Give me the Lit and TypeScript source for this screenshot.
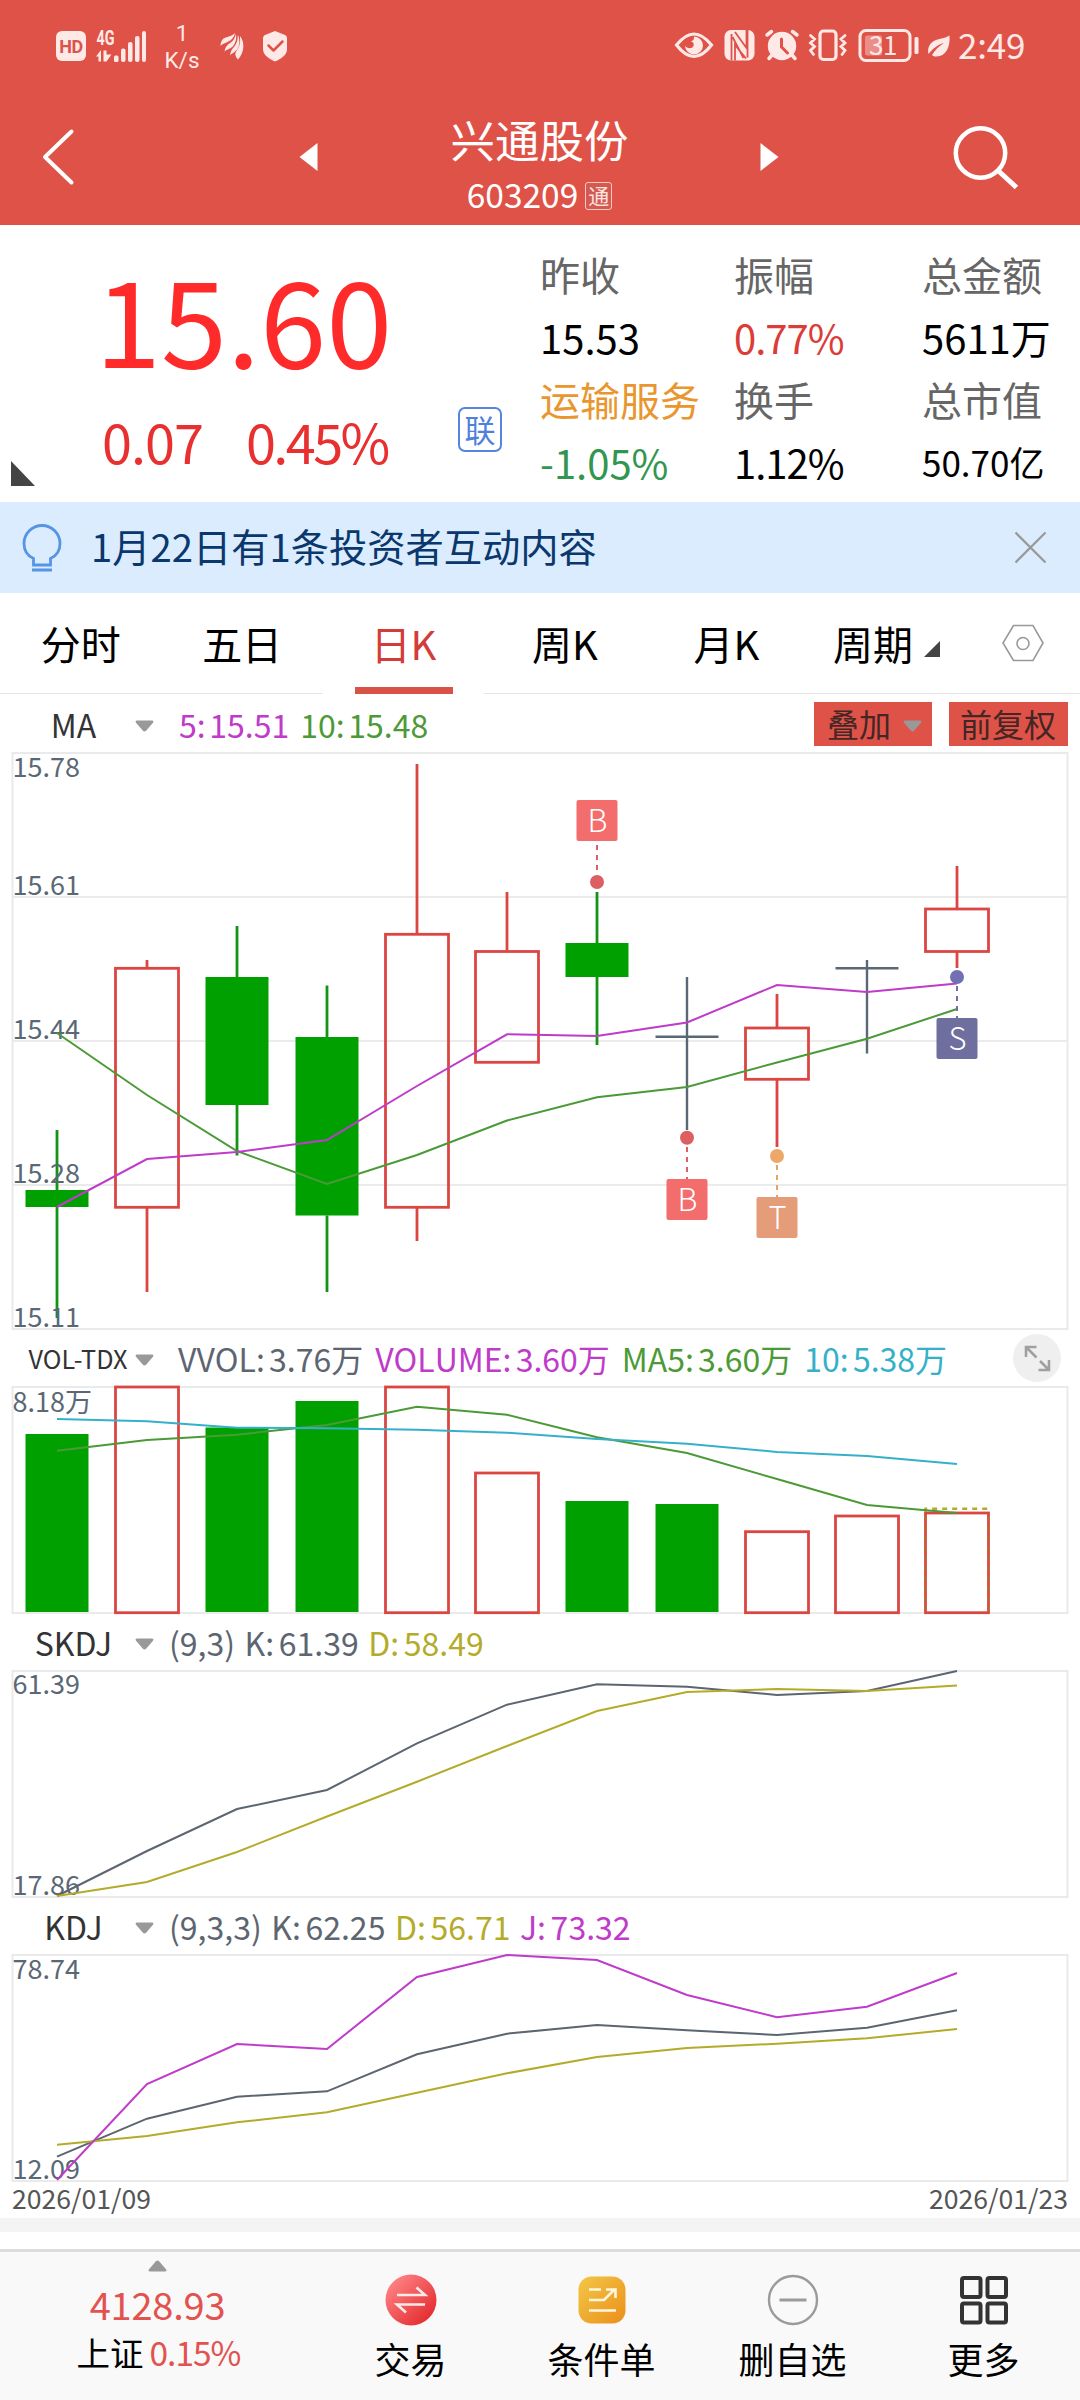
import { LitElement, html, svg, css, nothing } from "lit";
import { customElement } from "lit/decorators.js";
import { classMap } from "lit/directives/class-map.js";

type Kind = "up" | "down" | "flat";
interface Candle { kind: Kind; high: number; top: number; bottom: number; low: number; }
interface Marker { i: number; letter: string; tone: string; dot: number; box: number; from: number; to: number; }
interface Reading { text: string; tone: string; }

const X0 = 57;
const STEP = 90;
const cx = (i: number) => X0 + STEP * i;

const CANDLES: Candle[] = [
  { kind: "down", high: 1130, top: 1190, bottom: 1207, low: 1318 },
  { kind: "up", high: 960, top: 968.3, bottom: 1207.3, low: 1292 },
  { kind: "down", high: 926, top: 977, bottom: 1105, low: 1155.5 },
  { kind: "down", high: 985.5, top: 1037, bottom: 1215.5, low: 1292 },
  { kind: "up", high: 764, top: 934.3, bottom: 1207.3, low: 1241 },
  { kind: "up", high: 892, top: 951.5, bottom: 1062.3, low: 1062 },
  { kind: "down", high: 892, top: 943, bottom: 977, low: 1045 },
  { kind: "flat", high: 977, top: 1036.7, bottom: 1036.7, low: 1130 },
  { kind: "up", high: 994, top: 1028, bottom: 1079.3, low: 1147 },
  { kind: "flat", high: 960, top: 968.3, bottom: 968.3, low: 1053.5 },
  { kind: "up", high: 866, top: 909, bottom: 951.5, low: 968 },
];

const MARKERS: Marker[] = [
  { i: 6, letter: "B", tone: "buy", dot: 882, box: 800, from: 845, to: 871 },
  { i: 7, letter: "B", tone: "buy", dot: 1137.7, box: 1179, from: 1147, to: 1179 },
  { i: 8, letter: "T", tone: "turn", dot: 1156, box: 1197, from: 1165, to: 1197 },
  { i: 10, letter: "S", tone: "sell", dot: 977, box: 1018, from: 986, to: 1018 },
];

const VOLUMES: { kind: Kind; top: number }[] = [
  { kind: "down", top: 1434 }, { kind: "up", top: 1387 }, { kind: "down", top: 1427.5 },
  { kind: "down", top: 1401 }, { kind: "up", top: 1387 }, { kind: "up", top: 1473 },
  { kind: "down", top: 1501 }, { kind: "down", top: 1504 }, { kind: "up", top: 1531.7 },
  { kind: "up", top: 1516 }, { kind: "up", top: 1513 },
];

const LINES = {
  ma5: [1207, 1159, 1152, 1140, 1086, 1034.3, 1036, 1022.5, 985, 992, 983.5],
  ma10: [1033, 1095, 1151, 1184, 1155, 1120.5, 1097.3, 1087, 1062.5, 1038.7, 1009],
  vol5: [1450.7, 1440, 1434.7, 1425, 1406.7, 1414.7, 1437.3, 1453, 1479, 1505, 1513],
  vol10: [1419, 1421.3, 1427.7, 1428.3, 1429.7, 1432.7, 1439, 1443.7, 1452, 1456, 1464],
  skK: [1896, 1851, 1809, 1790, 1743.3, 1704.7, 1684.3, 1686.7, 1695, 1691, 1671],
  skD: [1896, 1882, 1852, 1816.5, 1781.7, 1746, 1711, 1692, 1689, 1691, 1685.5],
  k: [2156.7, 2118.7, 2096.7, 2091.3, 2054.3, 2033.7, 2025, 2030.3, 2035, 2027.7, 2010.3],
  d: [2144.7, 2136, 2122.3, 2112.3, 2092.7, 2073.3, 2057, 2048, 2043.7, 2038.3, 2029],
  j: [2180, 2084, 2044, 2049, 1977, 1955, 1960, 1995, 2017.3, 2006.7, 1973],
};

const line = (ys: number[], tone: string) =>
  svg`<polyline class="line ${tone}" points=${ys.map((y, i) => `${cx(i)},${y}`).join(" ")}></polyline>`;
const frame = (top: number, bottom: number) =>
  svg`<rect class="frame" x="12.5" y=${top} width="1055" height=${bottom - top}></rect>`;
const axis = (text: string, y: number) => svg`<text class="axis" x="12.5" y=${y}>${text}</text>`;

const caretDown = html`<svg class="caret" viewBox="0 0 19 12"><path d="M2 .5h15q2.500.5.8 2.500l-6.500 7.500q-1.800 1.800-3.600 0L1.200 3Q-.5 1 2 .5z"></path></svg>`;

@customElement("status-bar")
export class StatusBar extends LitElement {
  static styles = css`
    :host { display: block; color: #ffe9e7; font-family: Roboto, sans-serif; }
    .bar { display: flex; height: 90px; align-items: center; padding: 2px 56px 0 56px; box-sizing: border-box; }
    svg { display: block; flex: none; fill: #ffe9e7; }
    .hd { width: 30px; height: 30px; border-radius: 6px; background: #ffe9e7; color: #d9554c; font: 700 18px/31px Roboto, sans-serif; text-align: center; letter-spacing: -0.5px; }
    .sig { margin-left: 10px; }
    .net { font: 700 20px "Roboto", sans-serif; }
    .speed { width: 36px; margin: 2px 0 0 18px; display: flex; flex-direction: column; align-items: center; font-size: 22.500px; line-height: 27px; }
    .left { display: flex; align-items: center; flex: 1; }
    .feather { margin-left: 19px; }
    .shield { margin-left: 17px; }
    .right { display: flex; align-items: center; }
    .time { font: 400 35px/40px "Noto Sans CJK SC", sans-serif; width: 66px; margin: -4px 0 0 7px; white-space: nowrap; letter-spacing: -0.2px; }
    .pct { font: 400 26px "Noto Sans CJK SC", sans-serif; fill: #ffe9e7; letter-spacing: -0.5px; }
    .ln { fill: none; stroke: #ffe9e7; }
    .cut { fill: none; stroke: #df5248; }
  `;
  render() {
    return html`<div class="bar">
      <div class="left">
        <div class="hd">HD</div>
        <svg class="sig" width="50" height="34" viewBox="96 28 50 34">
          <text class="net" x="96.500" y="43.500" textLength="18" lengthAdjust="spacingAndGlyphs">4G</text>
          <path d="M101 60.500V49l-5 6.500h2.500v5zM103.500 49.500h3v4h5l-5 7h-3z"></path>
          <rect x="114" y="54.500" width="4.500" height="6.500" rx="1.500"></rect><rect x="121" y="47.500" width="4.500" height="13.500" rx="2"></rect>
          <rect x="128" y="41" width="4.500" height="20" rx="2"></rect><rect x="135" y="35" width="4.500" height="26" rx="2"></rect>
          <rect x="142" y="30" width="4" height="31" rx="2"></rect>
        </svg>
        <div class="speed"><span>1</span><span>K/s</span></div>
        <svg class="feather" width="26" height="28" viewBox="220 31 26 28">
          <path d="M221.500 45c0-3 1-6 3-7.500 2.500-1.500 8-2 11.500-5.500-1 5-4.500 8-8.500 9.500-2.500 1-4.500 1.500-6 3.500zM225.500 50.500c.5-4 2.500-6.500 5.500-8.500s5-4.500 5.800-9c1 4 .2 8-2.300 11.500-2.500 3.500-6.500 3.500-9 6zM231 54.500c.5-4 2-6.500 4-8.500 2.500-3 4-7 3.800-12 2 3 2 9 .2 13-1.500 3.500-6 5-8 7.500zM239 58.500c-3-3-3.500-6-1.500-8.500 3-3.500 4-8.500 3.500-15 5 6 4.500 16.500-2 23.500z"></path>
        </svg>
        <svg class="shield" width="26" height="32" viewBox="262 29 26 32">
          <path d="M275 30l10 4q2 1 2 3v11c0 6-6 10-12 12.500-6-2.500-12-6.500-12-12.500V37q0-2 2-3z"></path>
          <path class="cut" stroke-width="2.500" stroke-linecap="round" stroke-linejoin="round" d="M268.500 44.500l5 5 9-9"></path>
        </svg>
      </div>
      <div class="right">
        <svg width="252" height="36" viewBox="675 28 252 36">
          <path class="ln" stroke-width="3.200" d="M677.500 45C684 37 689.500 34 695 34s11 3 17.500 11C706 53.500 700.500 56.500 695 56.500S684 53.500 677.500 45z"></path>
          <path d="M695 36.500a9 9 0 1 1-9 9c2 3.500 7 3.500 8.500.5 1-3-1-4-2.500-4.500 3-1 3-3 3-5z"></path>
          <rect x="725.500" y="30" width="30" height="30.500" rx="6.500"></rect>
          <path class="cut" stroke-width="1.800" d="M732.500 60.500V34M748.500 57.500V30M736 32l11.500 16V30M733.500 37l11 21M736 60.500V45l11 13.500"></path>
          <circle cx="783" cy="46" r="14.200"></circle>
          <path class="ln" stroke-width="3.500" stroke-linecap="round" d="M768 35l4.500-3.500M798 35l-4.500-3.500M773 55l-3 3.500M793 55l3 3.500"></path>
          <path class="cut" stroke-width="3" stroke-linecap="round" d="M782.500 39v8l6 6"></path>
          <rect class="ln" stroke-width="3.200" x="821" y="31" width="16" height="28.500" rx="3.500"></rect>
          <path class="ln" stroke-width="2.800" stroke-linecap="round" d="M811.500 35.500l4 3.500-4 4 4 3.500-4 4 3 4M846 35.500l-4 3.500 4 4-4 3.500 4 4-3 4"></path>
          <rect class="ln" stroke-width="3" x="861" y="30.500" width="50" height="30" rx="6"></rect>
          <rect x="866" y="35.500" width="17" height="20" rx="2" opacity=".4"></rect>
          <rect x="915.500" y="37" width="4" height="17" rx="1.500"></rect>
          <text class="pct" x="870" y="55">31</text>
        </svg>
        <svg width="25" height="26" viewBox="927 33 25 26">
          <path d="M950.500 35.500c1 12-4 21-13 21-2 0-3.500-.5-4.500-1.500 3-5 7-9 12-12-7 2-11.500 6-15.500 11-1.500-6 1.500-12 7.500-14 4.500-1.500 9-1.500 13.500-4.500z"></path>
        </svg>
        <div class="time">2:49</div>
      </div>
    </div>`;
  }
}

@customElement("app-root")
export class AppRoot extends LitElement {
  static styles = css`
    :host { display: block; width: 1080px; height: 2400px; overflow: hidden; background: #fff; color: #000; font-family: "Noto Sans CJK SC", sans-serif; }
    * { box-sizing: border-box; }
    svg { display: block; flex: none; overflow: visible; }
    .header { height: 225px; background: #df5248; color: #fff; }
    .nav { display: grid; grid-template-columns: 299px 18px 1fr 18px 302px; height: 134px; align-items: center; }
    .nav .icon { fill: none; stroke: #fff; }
    .nav .tri { fill: #fff; }
    .back { padding-left: 40px; }
    .find { padding-left: 173px; }
    .title { display: flex; flex-direction: column; align-items: center; padding-left: 2px; }
    .name { font-size: 44.500px; line-height: 60px; margin-top: 14px; }
    .code { display: flex; align-items: center; gap: 7px; font-size: 33.500px; line-height: 50px; }
    .tong { width: 27px; height: 28px; margin-top: 4px; border: 1.500px solid #f7c9c5; border-radius: 3px; font-size: 21px; line-height: 24px; text-align: center; color: #ffe3e0; background: #d4594f; }

    .quote { display: flex; height: 277px; }
    .main { width: 540px; display: grid; grid-template-columns: 458px 1fr; grid-template-rows: 176px 101px; }
    .price { grid-column: 1 / 3; padding-left: 95px; color: #ff2a2a; font-size: 119px; line-height: 176px; padding-top: 3px; }
    .change { display: flex; align-items: flex-start; color: #e93030; font-size: 54px; line-height: 80px; }
    .corner { margin: 60px 67px 0 11px; width: 24px; height: 25px; fill: #444; }
    .delta { width: 144px; letter-spacing: -1px; }
    .rate { letter-spacing: -2.600px; }
    .lian { width: 44px; height: 45px; margin-top: 6px; border: 2px solid #5585dc; border-radius: 7px; font-size: 31px; line-height: 39px; text-align: center; color: #4f80dc; }
    .stats { display: grid; grid-template-columns: 194px 188px 1fr; grid-auto-rows: 62.600px; padding-top: 18px; flex: 1; font-size: 40px; line-height: 62.600px; white-space: nowrap; }
    .label { color: #666; }
    .orange { color: #ea962f; }
    .red { color: #dc3b38; }
    .green { color: #339650; }
    .pct { letter-spacing: -1px; }
    .green.pct { letter-spacing: 0; }
    .small { font-size: 35px; }

    .notice { display: flex; align-items: center; height: 91px; background: #dbecfe; padding: 0 33px 0 21px; color: #0a376c; font-size: 38.250px; }
    .notice span { flex: 1; padding-left: 28px; margin-top: -5px; }
    .bulb { fill: none; stroke: #5694e6; stroke-width: 2.800; }
    .close { stroke: #999; stroke-width: 2.300; }

    .tabs { display: flex; height: 101px; }
    .tab { display: flex; flex-direction: column; align-items: center; justify-content: center; width: 161.500px; height: 101px; font-size: 40px; line-height: 60px; padding-bottom: 1px; border-bottom: 1.500px solid #e6e6e6; }
    .tab.active { color: #d23c39; border-bottom: 0; padding: 20px 0 0; justify-content: space-between; }
    .mark { width: 98px; height: 7px; background: #d95248; }
    .tab.period { width: 164px; flex-direction: row; justify-content: flex-start; padding-left: 26px; gap: 11px; }
    .period svg { fill: #444; margin-top: 12px; }
    .tab.settings { width: 109px; padding-right: 5px; }
    .settings svg { fill: none; stroke: #999; stroke-width: 1.600; }

    .head { display: flex; align-items: center; height: 56px; font-size: 32px; line-height: 48px; white-space: nowrap; padding-right: 12px; }
    .head.first { height: 58px; padding-top: 1px; }
    .ind { width: 121px; margin-left: 14px; text-align: center; color: #333; padding-right: 2px; }
    .ind.tiny { font-size: 25.200px; padding-left: 7px; padding-right: 0; }
    .caret { width: 19px; height: 12px; fill: #999; margin-top: 4px; }
    .readings { display: flex; gap: 11px; flex: 1; padding-left: 25px; word-spacing: -3.500px; }
    .readings.wide { gap: 12px; font-kerning: none; padding-left: 24px; word-spacing: -3px; }
    .readings.paren { padding-left: 15px; gap: 9.500px; word-spacing: -2.500px; }
    .chip { display: flex; align-items: center; height: 44px; background: #df5248; color: #432625; margin-left: 17px; }
    .chip span { margin-top: -2px; }
    .chip.a { width: 118px; padding-left: 13px; gap: 12px; }
    .chip.b { width: 119px; justify-content: center; padding-right: 1px; }
    .expand { width: 48px; height: 48px; margin-right: 7px; }
    .expand circle { fill: #efefef; }
    .expand path { fill: none; stroke: #a0a0a0; stroke-width: 2.600; }
    .gray { color: #5c6570; }
    .purple { color: #bf3bc9; }
    .leaf { color: #4b9a37; }
    .cyan { color: #35b0c9; }
    .olive { color: #b4ab2a; }

    .frame { fill: none; stroke: #eaeaea; stroke-width: 2; }
    .grid { stroke: #ebebeb; stroke-width: 2; }
    .axis { fill: #5a6875; font-size: 27px; }
    .line { fill: none; stroke: currentColor; stroke-width: 2; }
    .wick, .box { stroke-width: 2.800; fill: none; }
    .up { stroke: #db4643; }
    .down { stroke: #00a000; }
    .box.down { fill: #00a000; stroke: none; }
    .wick.down { stroke: #149414; }
    .flat { stroke: #5a6875; stroke-width: 2.400; }
    .guess { fill: none; stroke: #b4ab2a; stroke-width: 2.400; stroke-dasharray: 5 5; }
    .guess.side { stroke: #a8761f; stroke-width: 1.600; }
    .flag { stroke: none; }
    .link { stroke-width: 2; stroke-dasharray: 5 5; }
    .letter { fill: #fff; font: 300 31px "Noto Sans CJK SC", sans-serif; text-anchor: middle; }
    .buy .flag { fill: #f36d6d; } .buy .dot { fill: #dc6062; } .buy .link { stroke: #dc6062; }
    .turn .flag { fill: #e49c79; } .turn .dot { fill: #eda767; } .turn .link { stroke: #e8a465; }
    .sell .flag { fill: #6f6f9f; } .sell .dot { fill: #7070b2; } .sell .link { stroke: #7070a8; }

    .dates { display: flex; justify-content: space-between; height: 36px; padding: 0 12px; font-size: 26.600px; line-height: 32px; color: #555; }
    .strip { height: 14px; background: #f4f4f4; }
    .blank { height: 17px; }

    .footer { display: flex; height: 151px; border-top: 3px solid #dcdddc; background: #f9f9f9; }
    .index { width: 315px; display: flex; flex-direction: column; align-items: center; padding-top: 8px; }
    .index .peak { width: 19px; height: 12px; fill: #999; }
    .value { font-size: 38px; line-height: 50px; margin-top: 7px; color: #e25350; letter-spacing: -0.200px; }
    .sub { display: flex; gap: 6px; font-size: 33.500px; line-height: 46px; padding-left: 2px; }
    .sub .pct { color: #e25350; }
    .action { width: 191px; display: flex; flex-direction: column; align-items: center; padding-top: 22px; }
    .action span { font-size: 36px; line-height: 50px; margin-top: 7px; }
  `;

  private readings(items: Reading[], variant = "") {
    return html`<div class=${classMap({ readings: true, paren: variant === "paren", wide: variant === "wide" })}>
      ${items.map((r) => html`<span class=${r.tone}>${r.text}</span>`)}
    </div>`;
  }

  private candle(c: Candle, i: number) {
    const x = cx(i);
    if (c.kind === "flat") {
      return svg`<path class="wick flat" d="M${x} ${c.high}V${c.low}M${x - 31.5} ${c.top}h63"></path>`;
    }
    return svg`<path class="wick ${c.kind}" d="M${x} ${c.high}V${c.top}M${x} ${c.bottom}V${Math.max(c.low, c.bottom)}"></path>
      <rect class="box ${c.kind}" x=${x - 31.5} y=${c.top} width="63" height=${c.bottom - c.top}></rect>`;
  }

  private marker(m: Marker) {
    const x = cx(m.i);
    return svg`<g class=${m.tone}>
      <path class="link" d="M${x} ${m.from}V${m.to}"></path>
      <circle class="dot" cx=${x} cy=${m.dot} r="7"></circle>
      <rect class="flag" x=${x - 20.5} y=${m.box} width="41" height="41" rx="2"></rect>
      <text class="letter" x=${x + 0.5} y=${m.box + 32}>${m.letter}</text>
    </g>`;
  }

  private priceChart() {
    return html`<svg width="1080" height="578" viewBox="0 752 1080 578">
      <path class="grid" d="M12.500 897h1055M12.500 1041h1055M12.500 1185h1055"></path>
      ${frame(753, 1329)}
      ${CANDLES.map((c, i) => this.candle(c, i))}
      ${axis("15.78", 777)}${axis("15.61", 894.7)}${axis("15.44", 1039)}${axis("15.28", 1182.5)}${axis("15.11", 1326.7)}
      ${line(LINES.ma10, "leaf")}${line(LINES.ma5, "purple")}
      ${MARKERS.map((m) => this.marker(m))}
    </svg>`;
  }

  private volumeChart() {
    const left = cx(10) - 31.5;
    return html`<svg width="1080" height="228" viewBox="0 1386 1080 228">
      ${frame(1387, 1613)}
      ${VOLUMES.map((v, i) => svg`<rect class="box ${v.kind}" x=${cx(i) - 31.5} y=${v.top} width="63" height=${(v.kind === "up" ? 1612.7 : 1612) - v.top}></rect>`)}
      <path class="guess" d="M${left} 1512v-3.300h63v3.300"></path>
      <path class="guess side" d="M${left} 1516v96M${left + 63} 1516v96"></path>
      ${axis("8.18万", 1411.5)}
      ${line(LINES.vol5, "leaf")}${line(LINES.vol10, "cyan")}
    </svg>`;
  }

  private stat(text: string, cls = "") {
    return html`<div class=${cls || nothing}>${text}</div>`;
  }

  render() {
    return html`
      <div class="header">
        <status-bar></status-bar>
        <div class="nav">
          <div class="back"><svg width="36" height="58" viewBox="40 128.500 36 58"><path class="icon" stroke-width="4" stroke-linecap="round" stroke-linejoin="round" d="M71.500 132L45 157.500 71.500 183"></path></svg></div>
          <svg width="19" height="28" viewBox="0 0 19 28"><path class="tri" d="M18.500 0v28L.5 14z"></path></svg>
          <div class="title">
            <div class="name">兴通股份</div>
            <div class="code"><span>603209</span><div class="tong">通</div></div>
          </div>
          <svg width="19" height="28" viewBox="0 0 19 28"><path class="tri" d="M.5 0v28l18-14z"></path></svg>
          <div class="find"><svg width="70" height="68" viewBox="951 123 70 68"><circle class="icon" stroke-width="4.500" cx="980.500" cy="153" r="24.700"></circle><path class="icon" stroke-width="5" d="M998 170.500l18.500 17"></path></svg></div>
        </div>
      </div>

      <div class="quote">
        <div class="main">
          <div class="price">15.60</div>
          <div class="change">
            <svg class="corner" viewBox="0 0 24 25"><path d="M0 0v25h24z"></path></svg>
            <span class="delta">0.07</span><span class="rate">0.45%</span>
          </div>
          <div class="lian">联</div>
        </div>
        <div class="stats">
          ${this.stat("昨收", "label")}${this.stat("振幅", "label")}${this.stat("总金额", "label")}
          ${this.stat("15.53")}${this.stat("0.77%", "red pct")}${this.stat("5611万")}
          ${this.stat("运输服务", "orange")}${this.stat("换手", "label")}${this.stat("总市值", "label")}
          ${this.stat("-1.05%", "green pct")}${this.stat("1.12%", "pct")}${this.stat("50.70亿", "small")}
        </div>
      </div>

      <div class="notice">
        <svg width="42" height="50" viewBox="21 523 42 50"><path class="bulb" d="M33.500 565v-6.500C27 555.500 24 550 24 543.500a18 18 0 0 1 36 0c0 6.500-3 12-9.500 15v6.500zM32 570h20"></path></svg>
        <span>1月22日有1条投资者互动内容</span>
        <svg width="33" height="33" viewBox="0 0 33 33"><path class="close" d="M1.500 1.500l30 30M31.500 1.500l-30 30"></path></svg>
      </div>

      <div class="tabs">
        <div class="tab">分时</div>
        <div class="tab">五日</div>
        <div class="tab active">日K<div class="mark"></div></div>
        <div class="tab">周K</div>
        <div class="tab">月K</div>
        <div class="tab period">周期<svg width="16" height="16" viewBox="0 0 16 16"><path d="M16 0v16H0z"></path></svg></div>
        <div class="tab settings"><svg width="42" height="38" viewBox="0 0 42 38"><path d="M11.500 1.500h19.500L41 19 31 36.500H11.500L1 19z"></path><circle cx="21" cy="19.500" r="6"></circle></svg></div>
      </div>

      <div class="head first">
        <div class="ind">MA</div>${caretDown}
        ${this.readings([{ text: "5: 15.51", tone: "purple" }, { text: "10: 15.48", tone: "leaf" }])}
        <div class="chip a"><span>叠加</span>${caretDown}</div>
        <div class="chip b"><span>前复权</span></div>
      </div>
      ${this.priceChart()}

      <div class="head">
        <div class="ind tiny">VOL-TDX</div>${caretDown}
        ${this.readings([
          { text: "VVOL: 3.76万", tone: "gray" }, { text: "VOLUME: 3.60万", tone: "purple" },
          { text: "MA5: 3.60万", tone: "leaf" }, { text: "10: 5.38万", tone: "cyan" },
        ], "wide")}
        <svg class="expand" viewBox="0 0 48 48"><circle cx="24" cy="24" r="24"></circle><path d="M13 23V13h10.500M13.500 13.500l10 10M36 26v10H25.500M35.500 35.500l-8.500-8.500"></path></svg>
      </div>
      ${this.volumeChart()}

      <div class="head">
        <div class="ind">SKDJ</div>${caretDown}
        ${this.readings([{ text: "(9,3)", tone: "gray" }, { text: "K: 61.39", tone: "gray" }, { text: "D: 58.49", tone: "olive" }], "paren")}
      </div>
      <svg width="1080" height="228" viewBox="0 1670 1080 228">
        ${frame(1671, 1897)}${axis("61.39", 1694.3)}${axis("17.86", 1895)}
        ${line(LINES.skK, "gray")}${line(LINES.skD, "olive")}
      </svg>

      <div class="head">
        <div class="ind">KDJ</div>${caretDown}
        ${this.readings([{ text: "(9,3,3)", tone: "gray" }, { text: "K: 62.25", tone: "gray" }, { text: "D: 56.71", tone: "olive" }, { text: "J: 73.32", tone: "purple" }], "paren")}
      </div>
      <svg width="1080" height="228" viewBox="0 1954 1080 228">
        ${frame(1955, 2181)}${axis("78.74", 1979)}${axis("12.09", 2179)}
        ${line(LINES.k, "gray")}${line(LINES.d, "olive")}${line(LINES.j, "purple")}
      </svg>
      <div class="dates"><span>2026/01/09</span><span>2026/01/23</span></div>
      <div class="strip"></div>
      <div class="blank"></div>

      <div class="footer">
        <div class="index">
          <svg class="peak" viewBox="0 0 19 12"><path d="M2 11.500h15q2.500-.5.8-2.500L11.300 1.500q-1.800-1.800-3.600 0L1.200 9Q-.5 11 2 11.500z"></path></svg>
          <div class="value">4128.93</div>
          <div class="sub"><span>上证</span><span class="pct">0.15%</span></div>
        </div>
        <div class="action">
          <svg width="52" height="52" viewBox="0 0 52 52">
            <defs><linearGradient id="trade" x1="0" y1="0" x2="1" y2="1"><stop offset=".1" stop-color="#ff8486"></stop><stop offset=".9" stop-color="#e32a2d"></stop></linearGradient></defs>
            <circle cx="26" cy="26" r="25.500" fill="url(#trade)"></circle>
            <path d="M12 21h28L31.500 13.500M40 30.500H12l9 8" fill="none" stroke="#ffeaea" stroke-width="2.600"></path>
          </svg><span>交易</span>
        </div>
        <div class="action">
          <svg width="52" height="52" viewBox="0 0 52 52">
            <defs><linearGradient id="cond" x1="0" y1="0" x2="1" y2="1"><stop offset=".1" stop-color="#f1c242"></stop><stop offset=".9" stop-color="#ec9520"></stop></linearGradient></defs>
            <rect x="2.500" y="2.500" width="47" height="47" rx="13" fill="url(#cond)"></rect>
            <path d="M13 15.500h12M13 26h15l11-11M30 15.500h9.500V24M13 36.500h27" fill="none" stroke="#fff6dc" stroke-width="2.600"></path>
          </svg><span>条件单</span>
        </div>
        <div class="action">
          <svg width="52" height="52" viewBox="0 0 52 52"><circle cx="26" cy="26" r="24" fill="none" stroke="#9b9b9b" stroke-width="2.400"></circle><path d="M12.500 26h27" stroke="#9b9b9b" stroke-width="3"></path></svg><span>删自选</span>
        </div>
        <div class="action">
          <svg width="52" height="52" viewBox="0 0 52 52"><g fill="none" stroke="#333" stroke-width="4"><rect x="4" y="4" width="18.500" height="19" rx="2"></rect><rect x="29.500" y="4" width="18.500" height="19" rx="2"></rect><rect x="4" y="29.500" width="18.500" height="19" rx="2"></rect><rect x="29.500" y="29.500" width="18.500" height="19" rx="2"></rect></g></svg><span>更多</span>
        </div>
      </div>
    `;
  }
}
